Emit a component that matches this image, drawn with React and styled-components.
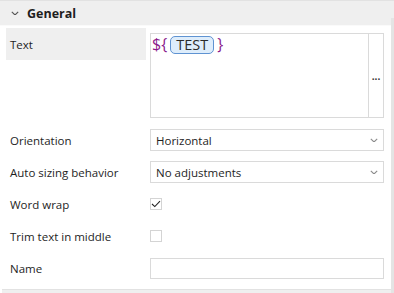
import React from "react";
import styled, { createGlobalStyle } from "styled-components";

const GlobalStyle = createGlobalStyle`
    body {
        margin: 0;
        background: #ffffff;
        font-family: "Open Sans", "Noto Sans", sans-serif;
        color: #1e1e1e;
    }
`;

const Page = styled.div`
    position: relative;
    width: 394px;
    height: 293px;
    overflow: hidden;
    background: #ffffff;
`;

const Scrollbar = styled.div`
    position: absolute;
    top: 18px;
    right: 0;
    width: 3px;
    bottom: 0;
    background: #e4e4e4;
`;

const SectionHeader = styled.div`
    display: flex;
    align-items: center;
    gap: 8px;
    height: 24px;
    padding-left: 11px;
    margin-left: ${(p) => (p.$inset ? "2px" : "0")};
    margin-right: ${(p) => (p.$inset ? "3px" : "0")};
    background: #efefef;
    border-top: 1px solid #e2e2e2;
    border-bottom: 1px solid #fafafa;
    font-size: 12.5px;
    font-weight: 700;
    color: #1e1e1e;
`;

const Grid = styled.div`
    display: grid;
    grid-template-columns: 140px 234px;
    column-gap: 4px;
    padding: 2px 10px 5px 6px;
`;

const Label = styled.div`
    height: 32px;
    display: flex;
    align-items: center;
    padding-left: 4px;
    font-size: 11.5px;
    background: ${(p) => (p.$active ? "#efefef" : "transparent")};
`;

const Cell = styled.div`
    min-height: 32px;
    display: flex;
    align-items: ${(p) => (p.$top ? "flex-start" : "center")};
    padding-top: ${(p) => (p.$top ? "5px" : "0")};
    padding-bottom: ${(p) => (p.$top ? "6px" : "0")};
`;

const TextBox = styled.div`
    display: flex;
    width: 100%;
    height: 85px;
    box-sizing: border-box;
    border: 1px solid #dadada;
`;

const Editor = styled.div`
    flex: 1;
    display: flex;
    align-items: center;
    align-self: flex-start;
    gap: 3px;
    padding: 1px 0 0 1px;
    font-size: 16px;
    line-height: 19px;
`;

const Brace = styled.span`
    color: #8b1a8b;
`;

const Chip = styled.span`
    display: inline-flex;
    align-items: center;
    height: 16px;
    padding: 0 5px;
    border: 1px solid #5f93d2;
    border-radius: 5px;
    background: #deedfb;
    color: #2a2a2a;
    font-size: 14.5px;
`;

const MoreButton = styled.div`
    width: 14px;
    border-left: 1px solid #dadada;
    display: flex;
    align-items: center;
    justify-content: center;
    font-size: 10px;
    font-weight: 700;
    color: #333;
`;

const Select = styled.div`
    display: flex;
    align-items: center;
    justify-content: space-between;
    width: 100%;
    height: 22px;
    box-sizing: border-box;
    border: 1px solid #dadada;
    padding: 0 5px 0 5px;
    font-size: 11.5px;
`;

const Input = styled.div`
    width: 100%;
    height: 21px;
    box-sizing: border-box;
    border: 1px solid #dadada;
`;

const Check = styled.div`
    width: 12px;
    height: 12px;
    box-sizing: border-box;
    border: 1px solid #d4d4d4;
    display: flex;
    align-items: center;
    justify-content: center;
`;

function Chevron({ color, size = 8 }) {
    return (
        <svg width={size} height={size * 0.6} viewBox="0 0 10 6">
            <path d="M1 1 L5 5 L9 1" fill="none" stroke={color} strokeWidth="1.4" />
        </svg>
    );
}

function Dropdown({ value }) {
    return (
        <Select>
            <span>{value}</span>
            <Chevron color="#8c8c8c" size={8} />
        </Select>
    );
}

export default function App() {
    return (
        <Page>
            <GlobalStyle />
            <SectionHeader>
                <Chevron color="#555" size={8} />
                <span>General</span>
            </SectionHeader>
            <Grid>
                <Label $active>Text</Label>
                <Cell $top>
                    <TextBox>
                        <Editor>
                            <Brace>{"${"}</Brace>
                            <Chip>TEST</Chip>
                            <Brace>{"}"}</Brace>
                        </Editor>
                        <MoreButton>...</MoreButton>
                    </TextBox>
                </Cell>

                <Label>Orientation</Label>
                <Cell>
                    <Dropdown value="Horizontal" />
                </Cell>

                <Label>Auto sizing behavior</Label>
                <Cell>
                    <Dropdown value="No adjustments" />
                </Cell>

                <Label>Word wrap</Label>
                <Cell>
                    <Check>
                        <svg width="10" height="8" viewBox="0 0 10 8">
                            <path d="M1 4 L3.8 6.6 L9 1.2" fill="none" stroke="#222" strokeWidth="1.1" />
                        </svg>
                    </Check>
                </Cell>

                <Label>Trim text in middle</Label>
                <Cell>
                    <Check />
                </Cell>

                <Label>Name</Label>
                <Cell>
                    <Input />
                </Cell>
            </Grid>
            <SectionHeader $inset />
            <Scrollbar />
        </Page>
    );
}
